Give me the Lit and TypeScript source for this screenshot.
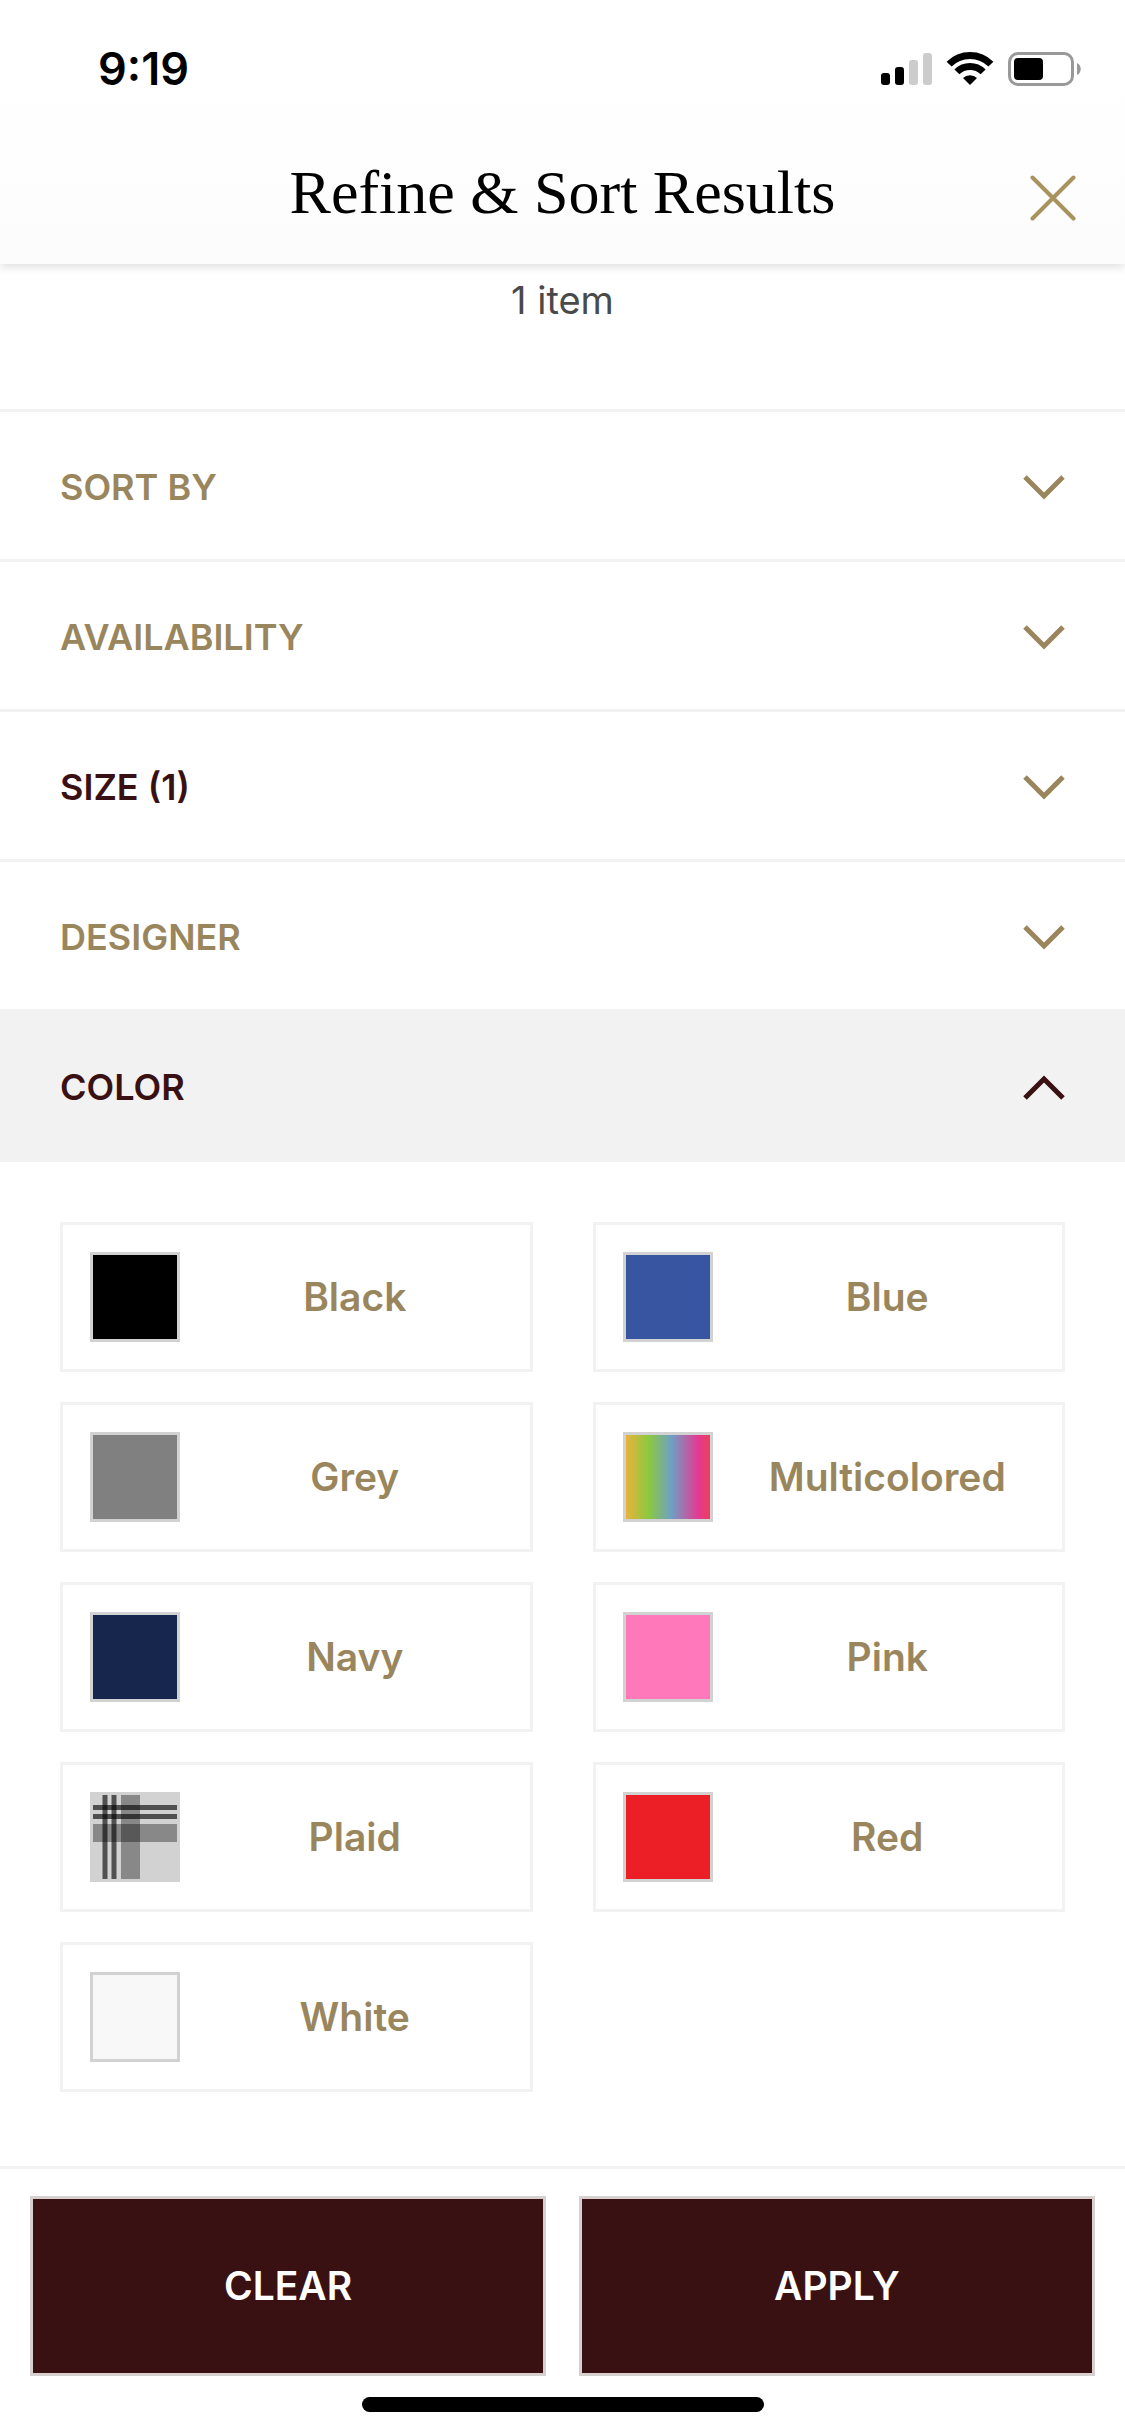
import { LitElement, html, css, svg } from "lit";
import { customElement, property, state } from "lit/decorators.js";
import { classMap } from "lit/directives/class-map.js";

interface Facet {
  id: string;
  label: string;
  count: number;
}

interface Swatch {
  name: string;
  tone: string;
}

const FACETS: Facet[] = [
  { id: "sort", label: "Sort by", count: 0 },
  { id: "availability", label: "Availability", count: 0 },
  { id: "size", label: "Size", count: 1 },
  { id: "designer", label: "Designer", count: 0 },
  { id: "color", label: "Color", count: 0 },
];

const SWATCHES: Swatch[] = [
  { name: "Black", tone: "black" },
  { name: "Blue", tone: "blue" },
  { name: "Grey", tone: "grey" },
  { name: "Multicolored", tone: "multi" },
  { name: "Navy", tone: "navy" },
  { name: "Pink", tone: "pink" },
  { name: "Plaid", tone: "plaid" },
  { name: "Red", tone: "red" },
  { name: "White", tone: "white" },
];

@customElement("status-bar")
export class StatusBar extends LitElement {
  static styles = css`
    :host {
      display: flex;
      justify-content: space-between;
      align-items: center;
      padding: 42px 42px 0 98px;
      font: 600 45px/54px Inter, "Liberation Sans", sans-serif;
      color: #000;
    }
    .icons {
      display: block;
      width: 204px;
      height: 36px;
    }
  `;

  render() {
    return html`
      <span>9:19</span>
      <svg class="icons" viewBox="0 0 204 36" aria-hidden="true">
        <rect x="2" y="22" width="9" height="12" rx="3" />
        <rect x="16" y="16" width="9" height="18" rx="3" />
        <rect x="30" y="9" width="9" height="25" rx="3" fill="#ccc" />
        <rect x="44" y="2" width="9" height="32" rx="3" fill="#ccc" />
        <g fill="none" stroke="#000" stroke-width="7">
          <path d="M70.100 13.100a29.500 29.500 0 0 1 41.800 0" />
          <path d="M77.900 20.900a18.500 18.500 0 0 1 26.200 0" />
        </g>
        <path d="M91 34l-7-7a10 10 0 0 1 14 0z" />
        <rect x="130.500" y="2.500" width="63" height="31" rx="8.500" fill="none" stroke="#999" stroke-width="3" />
        <rect x="135" y="7" width="29" height="22" rx="4" />
        <path d="M198 12c5 2 5 10 0 12z" fill="#999" />
      </svg>
    `;
  }
}

@customElement("facet-row")
export class FacetRow extends LitElement {
  @property() label = "";
  @property({ type: Number }) count = 0;
  @property({ type: Boolean }) open = false;

  static styles = css`
    :host {
      display: block;
    }
    .row {
      display: flex;
      justify-content: space-between;
      align-items: center;
      box-sizing: border-box;
      width: 100%;
      margin: 0;
      padding: 51px 60px 48px;
      border: 0;
      border-top: 3px solid #f2f2f2;
      background: transparent;
      color: #9a865d;
      font: 600 36px/48px Inter, "Liberation Sans", sans-serif;
      text-transform: uppercase;
      text-align: left;
      cursor: pointer;
    }
    .active .label,
    .open {
      color: #3a1113;
    }
    .open {
      background: #f2f2f2;
    }
    .chevron {
      width: 42px;
      height: 25px;
      fill: none;
      stroke: currentColor;
      stroke-width: 5;
    }
  `;

  render() {
    const text = this.count ? `${this.label} (${this.count})` : this.label;
    const d = this.open ? "M2 23l19-19 19 19" : "M2 2l19 19L40 2";
    return html`
      <button
        class=${classMap({ row: true, active: this.count > 0, open: this.open })}
        type="button"
        aria-expanded=${this.open ? "true" : "false"}
      >
        <span class="label">${text}</span>
        <svg class="chevron" viewBox="0 0 42 25" aria-hidden="true">${svg`<path d=${d} />`}</svg>
      </button>
    `;
  }
}

@customElement("color-option")
export class ColorOption extends LitElement {
  @property() name = "";
  @property() tone = "";

  static styles = css`
    :host {
      display: block;
    }
    .card {
      display: flex;
      align-items: center;
      box-sizing: border-box;
      width: 100%;
      margin: 0;
      padding: 27px 0 27px 27px;
      border: 3px solid #f2f2f2;
      background: #fff;
      color: #9a865d;
      font: 600 39px/48px Inter, "Liberation Sans", sans-serif;
      cursor: pointer;
    }
    .swatch {
      flex: none;
      box-sizing: border-box;
      width: 90px;
      height: 90px;
      border: 3px solid #d2d2d2;
    }
    .name {
      flex: 1;
      text-align: center;
    }
    .black { background: #000; }
    .blue { background: #3855a2; }
    .grey { background: #808080; }
    .navy { background: #16264c; }
    .pink { background: #ff78b9; }
    .red { background: #ed1f26; }
    .white { background: #f8f8f8; }
    .multi {
      background: linear-gradient(90deg, #e9b23c 0%, #8bc93f 27%, #6f9fc4 54%, #e43a92 86%, #ea3f5b 100%);
    }
    .plaid { background: #d2d2d2; }
    .weave {
      display: block;
      width: 84px;
      height: 84px;
    }
  `;

  render() {
    const weave = html`
      <svg class="weave" viewBox="0 0 84 84" aria-hidden="true">
        <g fill="#000" fill-opacity="0.350">
          <rect x="28" width="19" height="84" />
          <rect y="29" width="84" height="18" />
        </g>
        <g fill="#000" fill-opacity="0.620">
          <rect x="9.500" width="5" height="84" />
          <rect x="18.500" width="5" height="84" />
          <rect y="10" width="84" height="5" />
          <rect y="19" width="84" height="5" />
        </g>
      </svg>
    `;
    return html`
      <button class="card" type="button">
        <span class="swatch ${this.tone}">${this.tone === "plaid" ? weave : ""}</span>
        <span class="name">${this.name}</span>
      </button>
    `;
  }
}

@customElement("app-root")
export class AppRoot extends LitElement {
  @state() private openId = "color";

  static styles = css`
    :host {
      display: flex;
      flex-direction: column;
      min-height: 100vh;
      background: #fff;
      font-family: Inter, "Liberation Sans", sans-serif;
    }
    .top {
      background: linear-gradient(#fff 30%, #fcfcfc);
      box-shadow: 0 3px 9px rgba(0, 0, 0, 0.13);
    }
    .bar {
      display: grid;
      grid-template-columns: 1fr auto 1fr;
      align-items: center;
      padding: 54px 49px 30px;
    }
    .title {
      grid-column: 2;
      margin: 0;
      color: #000;
      font: 400 62px/84px "Liberation Serif", serif;
    }
    .close {
      justify-self: end;
      margin: 12px 0 0;
      padding: 0;
      border: 0;
      background: transparent;
      cursor: pointer;
    }
    .cross {
      display: block;
      width: 46px;
      height: 46px;
      fill: none;
      stroke: #a8935f;
      stroke-width: 4;
      stroke-linecap: round;
    }
    .count {
      margin: 0;
      padding: 12px 60px 85px;
      color: #4a4a4a;
      font-size: 38px;
      line-height: 48px;
      text-align: center;
    }
    .options {
      display: grid;
      grid-template-columns: 1fr 1fr;
      gap: 30px 60px;
      margin: 0;
      padding: 60px;
      border-top: 3px solid #f2f2f2;
    }
    .actions {
      display: flex;
      gap: 33px;
      margin-top: auto;
      padding: 27px 30px 21px;
      border-top: 3px solid #f2f2f2;
    }
    .action {
      flex: 1;
      margin: 0;
      padding: 63px 0;
      border: 3px solid #d8cfcf;
      background: #3a1113;
      color: #fff;
      font: 600 39px/48px Inter, "Liberation Sans", sans-serif;
      text-transform: uppercase;
      cursor: pointer;
    }
    .home {
      align-self: center;
      width: 402px;
      height: 15px;
      margin-bottom: 24px;
      border-radius: 8px;
      background: #000;
    }
  `;

  private toggle(id: string) {
    this.openId = this.openId === id ? "" : id;
  }

  render() {
    return html`
      <header class="top">
        <status-bar></status-bar>
        <div class="bar">
          <h1 class="title">Refine &amp; Sort Results</h1>
          <button class="close" type="button" aria-label="Close">
            <svg class="cross" viewBox="0 0 46 46" aria-hidden="true">
              <path d="M2.500 2.500l41 41M43.500 2.500l-41 41" />
            </svg>
          </button>
        </div>
      </header>
      <p class="count">1 item</p>
      ${FACETS.map(
        (f) => html`<facet-row
          .label=${f.label}
          .count=${f.count}
          .open=${this.openId === f.id}
          @click=${() => this.toggle(f.id)}
        ></facet-row>`
      )}
      ${this.openId === "color"
        ? html`<div class="options" role="group" aria-label="Color">
            ${SWATCHES.map((s) => html`<color-option .name=${s.name} .tone=${s.tone}></color-option>`)}
          </div>`
        : ""}
      <footer class="actions">
        <button class="action" type="button">Clear</button>
        <button class="action" type="button">Apply</button>
      </footer>
      <div class="home"></div>
    `;
  }
}
